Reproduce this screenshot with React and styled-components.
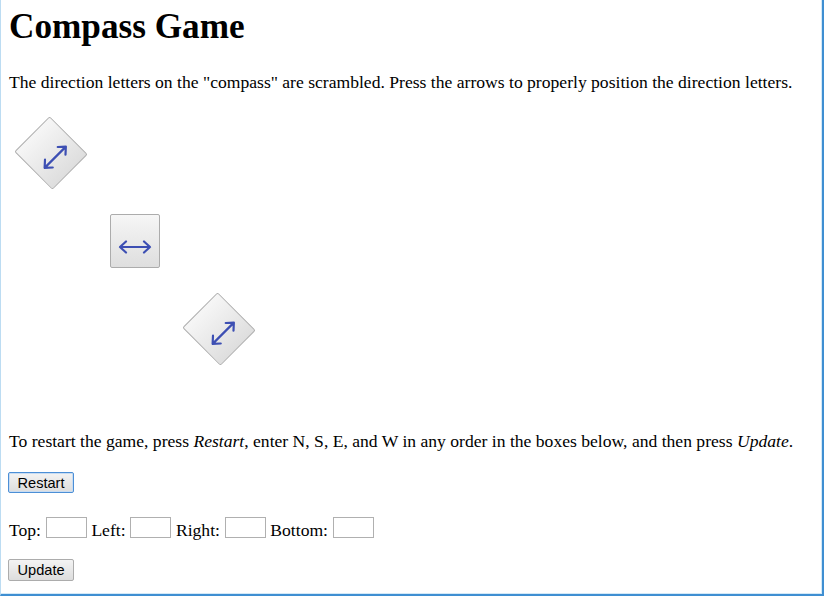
import React from "react";
import styled, { createGlobalStyle } from "styled-components";

const Global = createGlobalStyle`
  html, body { margin: 0; padding: 0; background: #ffffff; }
  body { font-family: "Liberation Serif", "Times New Roman", serif; color: #000; }
`;

const Frame = styled.div`
  box-sizing: border-box;
  width: 824px;
  height: 596px;
  border-left: 1px solid #bcdcf2;
  border-right: 2px solid #3f8fd2;
  border-bottom: 2px solid #3f8fd2;
  box-shadow: inset -1px -1px 0 #d3e9f8;
  padding: 7px 0 0 8px;
  display: flex;
  flex-direction: column;
  align-items: flex-start;
  overflow: hidden;
`;

const Title = styled.h1`
  margin: 0;
  font-size: 35.2px;
  line-height: 40px;
  font-weight: bold;
`;

const Text = styled.p`
  margin: ${(p) => p.$top}px 0 0;
  font-size: 17.6px;
  line-height: 20px;
  white-space: nowrap;
`;

const Compass = styled.div`
  margin-top: 17px;
  display: grid;
  grid-template-columns: repeat(3, 84px);
  grid-template-rows: repeat(3, 88px);
  place-items: center;
`;

const ArrowButton = styled.button`
  grid-column: ${(p) => p.$col};
  grid-row: ${(p) => p.$row};
  box-sizing: border-box;
  width: 50px;
  height: 54px;
  padding: 12px 0 0;
  border: 1px solid #acacac;
  border-radius: 2px;
  background: linear-gradient(#f6f6f6, #dedede);
  transform: rotate(${(p) => p.$angle}deg);
  display: flex;
  align-items: center;
  justify-content: center;
  cursor: pointer;
`;

const PlainButton = styled.button`
  margin: ${(p) => p.$top}px 0 0 -1px;
  box-sizing: border-box;
  height: ${(p) => p.$h}px;
  padding: 0 8.5px;
  font-family: Arial, "Liberation Sans", sans-serif;
  font-size: 14.6px;
  color: #000;
  border: 1px solid ${(p) => (p.$focus ? "#4c8fd6" : "#acacac")};
  border-radius: 2px;
  background: linear-gradient(#f3f3f3, #dddddd);
  box-shadow: ${(p) => (p.$focus ? "inset 0 0 0 1px #c8dcf2" : "none")};
`;

const FieldRow = styled.div`
  margin-top: 23.5px;
  display: flex;
  align-items: flex-end;
  gap: 4.7px;
  font-size: 17.6px;
  line-height: 16px;
`;

const Label = styled.span`
  white-space: nowrap;
`;

const Field = styled.input`
  box-sizing: border-box;
  width: 41px;
  height: 21px;
  margin: 0;
  padding: 1px 3px;
  border: 1px solid #b0b0b0;
  background: #fff;
  font-family: Arial, "Liberation Sans", sans-serif;
  font-size: 14.6px;
`;

const Arrow = () => (
  <svg width="34" height="14" viewBox="0 0 34 14" fill="none">
    <path
      d="M2 7H32M8 1.5L2 7L8 12.5M26 1.5L32 7L26 12.5"
      stroke="#3d4fb3"
      strokeWidth="2.2"
      strokeLinecap="round"
      strokeLinejoin="round"
    />
  </svg>
);

export default function App() {
  const fields = ["Top:", "Left:", "Right:", "Bottom:"];
  return (
    <>
      <Global />
      <Frame>
        <Title>Compass Game</Title>
        <Text $top={25}>
          The direction letters on the "compass" are scrambled. Press the arrows to properly position the direction letters.
        </Text>
        <Compass>
          <ArrowButton $col={1} $row={1} $angle={-45} aria-label="arrow">
            <Arrow />
          </ArrowButton>
          <ArrowButton $col={2} $row={2} $angle={0} aria-label="arrow">
            <Arrow />
          </ArrowButton>
          <ArrowButton $col={3} $row={3} $angle={-45} aria-label="arrow">
            <Arrow />
          </ArrowButton>
        </Compass>
        <Text $top={58}>
          To restart the game, press <i>Restart</i>, enter N, S, E, and W in any order in the boxes below, and then press <i>Update</i>.
        </Text>
        <PlainButton $top={21} $h={21} $focus>
          Restart
        </PlainButton>
        <FieldRow>
          {fields.map((f) => (
            <React.Fragment key={f}>
              <Label>{f}</Label>
              <Field type="text" />
            </React.Fragment>
          ))}
        </FieldRow>
        <PlainButton $top={21.5} $h={22}>
          Update
        </PlainButton>
      </Frame>
    </>
  );
}
